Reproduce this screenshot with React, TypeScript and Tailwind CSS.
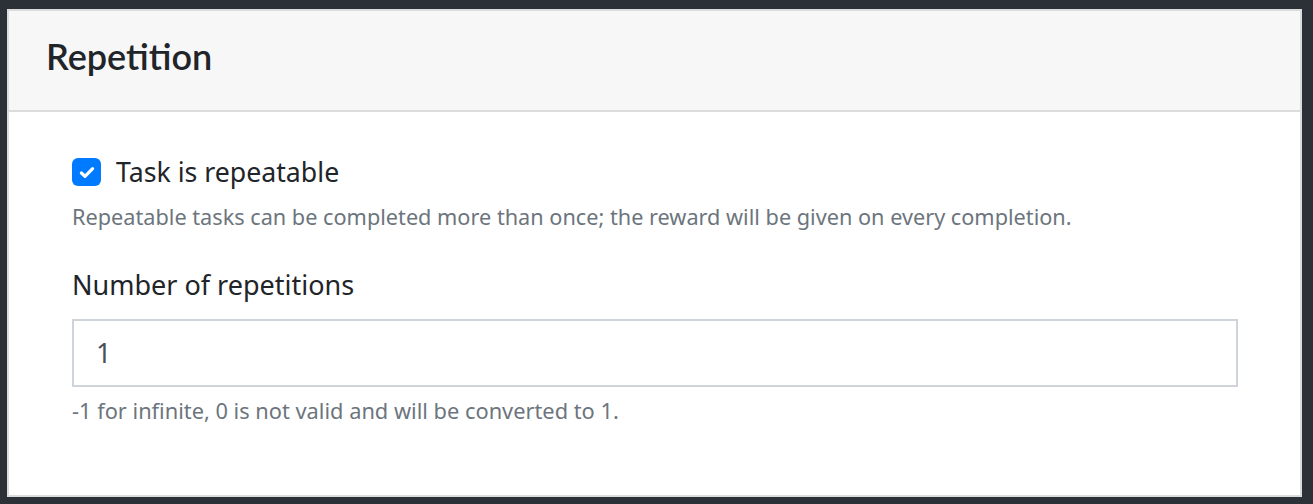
export default function App() {
  return (
    <div className="min-h-[504px] bg-[#2c3137] pt-[9px] pl-[7px] pr-[11px] pb-[9px]">
      <div className="border-2 border-[#dcdcdc] bg-white" style={{ fontFamily: '"Noto Sans", "Open Sans", sans-serif' }}>
        <div className="h-[101px] bg-[#f7f7f7] border-b-2 border-[#dcdcdc] flex items-center pl-[37px] pb-[10px]">
          <h2 className="text-[36px] font-semibold text-[#212529] leading-none" style={{ fontFamily: 'Lato, sans-serif' }}>
            Repetition
          </h2>
        </div>
        <div className="pl-[63px] pr-[62px] pt-[45px] pb-[69px]">
          <label className="flex items-center gap-[15px]">
            <span className="w-[29px] h-[28px] rounded-[6px] bg-[#007bff] flex items-center justify-center">
              <svg width="16" height="13" viewBox="0 0 16 13" fill="none">
                <path d="M2.4 7l3.6 3.3L13.6 2.6" stroke="white" strokeWidth="3.2" strokeLinecap="round" strokeLinejoin="round" />
              </svg>
            </span>
            <span className="text-[26.7px] text-[#212529] leading-[30px]">Task is repeatable</span>
          </label>
          <p className="mt-[15px] text-[21.7px] text-[#6c757d] leading-[30px]">
            Repeatable tasks can be completed more than once; the reward will be given on every completion.
          </p>
          <p className="mt-[38px] text-[27px] text-[#212529] leading-[30px]">Number of repetitions</p>
          <div className="mt-[19px] h-[68px] border-2 border-[#ced4da] flex items-center pl-[22px] text-[27px] text-[#495057]">
            1
          </div>
          <p className="mt-[9px] text-[21.8px] text-[#6c757d] leading-[30px]">
            -1 for infinite, 0 is not valid and will be converted to 1.
          </p>
        </div>
      </div>
    </div>
  )
}
